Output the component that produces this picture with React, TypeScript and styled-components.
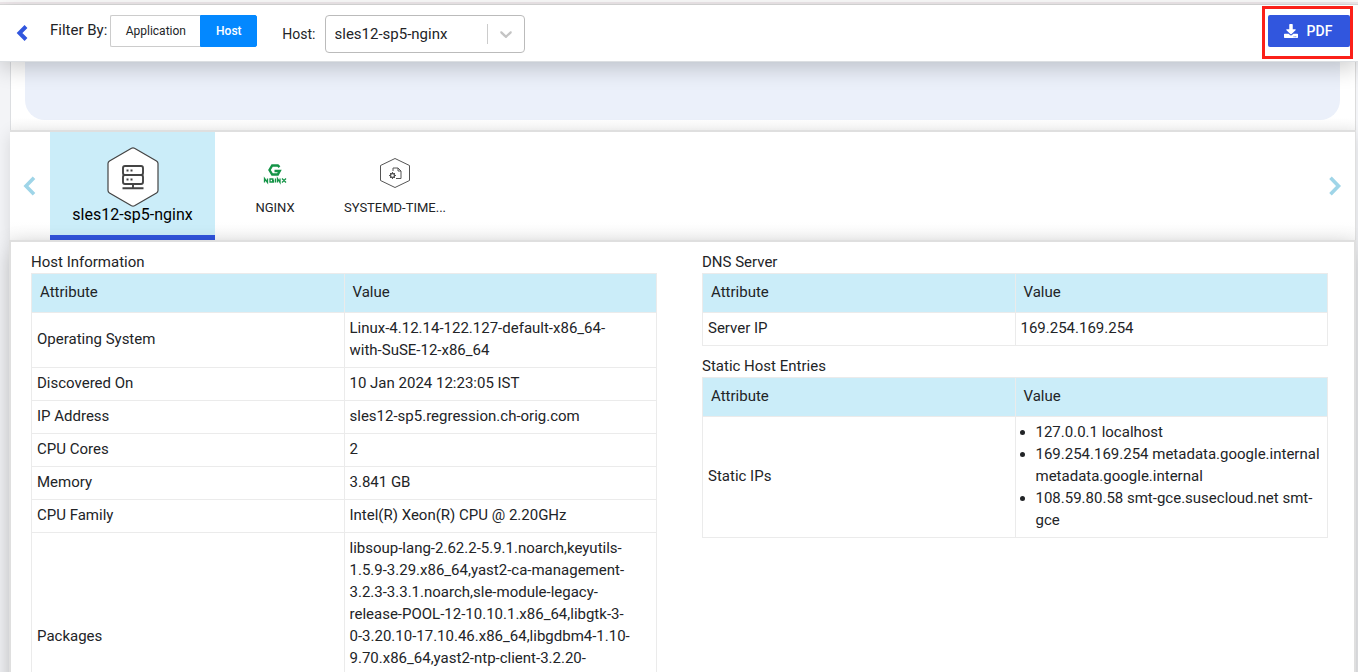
import React from 'react';
import styled, { createGlobalStyle } from 'styled-components';
import { FaDownload } from 'react-icons/fa';

const GlobalStyle = createGlobalStyle`
  *, *::before, *::after { box-sizing: border-box; }
  body {
    margin: 0;
    background: #f3f4f7;
    color: #222427;
    font-family: Roboto, "Liberation Sans", sans-serif;
    font-size: 15px;
    line-height: 22px;
  }
  button, select { font-family: inherit; }
`;

const Page = styled.div`
  height: 100vh;
  display: flex;
  flex-direction: column;
  overflow: hidden;
`;

const TopStrip = styled.div`
  flex: none;
  height: 5px;
  background: #fff;
  border-top: 2px solid #fbfbfb;
  border-bottom: 1px solid #dcdcdc;
  box-shadow: inset 0 2px #efe9ec;
`;

const Header = styled.header`
  flex: none;
  position: relative;
  z-index: 1;
  display: flex;
  align-items: flex-start;
  height: 57px;
  padding: 10px 8px 0 15px;
  background: #fff;
  border-bottom: 1px solid #dcdfe2;
  box-shadow: 0 6px 22px rgba(0, 0, 0, 0.2);
`;

const IconButton = styled.button`
  display: flex;
  align-items: center;
  justify-content: center;
  padding: 0;
  border: 0;
  background: none;
  cursor: pointer;
`;

const BackButton = styled(IconButton)`
  width: 14px;
  height: 36px;
`;

const FilterLabel = styled.span`
  margin: 0 3px 0 21px;
  line-height: 31px;
`;

const Segment = styled.button<{ $active?: boolean }>`
  height: 32px;
  padding: 0 12px;
  border: 1px solid ${p => (p.$active ? '#0388ff' : '#ccc')};
  border-radius: ${p => (p.$active ? '0 2px 2px 0' : '2px 0 0 2px')};
  border-right-width: ${p => (p.$active ? '1px' : '0')};
  background: ${p => (p.$active ? '#0388ff' : '#fff')};
  color: ${p => (p.$active ? '#fff' : '#222427')};
  font-size: 12px;
  font-weight: ${p => (p.$active ? 500 : 400)};
  cursor: pointer;
`;

const SegmentGroup = styled.div`
  display: flex;
  width: 147px;

  ${Segment}:first-child { flex: 0 0 90px; }
  ${Segment}:last-child { flex: 1; }
`;

const HostLabel = styled.label`
  margin: 0 9px 0 25px;
  font-size: 14px;
  line-height: 38px;
`;

const SelectBox = styled.div`
  position: relative;
  width: 200px;

  svg {
    position: absolute;
    top: 9px;
    right: 9px;
    pointer-events: none;
  }

  &::after {
    content: '';
    position: absolute;
    top: 9px;
    right: 37px;
    width: 1px;
    height: 20px;
    background: #ccc;
    pointer-events: none;
  }
`;

const Select = styled.select`
  display: block;
  width: 100%;
  height: 38px;
  padding: 0 40px 0 9px;
  border: 1px solid #bbb;
  border-radius: 4px;
  background: #fff;
  color: #222427;
  font-size: 15px;
  appearance: none;
`;

const PdfArea = styled.div`
  position: relative;
  margin-left: auto;

  &::after {
    content: '';
    position: absolute;
    inset: -9px -3px -12px -6px;
    border: 3px solid #fb2019;
    pointer-events: none;
  }
`;

const PdfButton = styled.button`
  display: flex;
  align-items: center;
  justify-content: center;
  gap: 9px;
  width: 82px;
  height: 32px;
  padding: 0 2px 0 0;
  border: 0;
  border-radius: 2px;
  background: #3156de;
  color: #fff;
  font-size: 14px;
  font-weight: 500;
  cursor: pointer;
`;

const Content = styled.main`
  flex: 1;
  min-height: 0;
  padding: 0 2px 0 10px;
  overflow-y: auto;
  scrollbar-width: none;
`;

const Summary = styled.section`
  height: 68px;
  padding: 0 15px 10px 14px;
  border-left: 1px solid #dcdee1;
  border-right: 1px solid #dcdcdc;
  background: linear-gradient(#fff 56px, #f8f8f8);
`;

const SummaryCard = styled.div`
  height: 100%;
  border-radius: 0 0 20px 20px;
  background: #ebf0fa;
`;

const Carousel = styled.nav`
  display: flex;
  align-items: stretch;
  height: 110px;
  border-top: 2px solid #dfdfdf;
  border-right: 1px solid #dfdfdf;
  background: linear-gradient(#fff 90px, #f9f9f9);
  box-shadow: 0 4px 16px rgba(0, 0, 0, 0.12);
`;

const ArrowButton = styled(IconButton)`
  flex: none;
  width: 40px;
`;

const Tabs = styled.div`
  flex: 1;
  display: flex;
`;

const Tab = styled.button<{ $active?: boolean }>`
  display: flex;
  flex-direction: column;
  align-items: center;
  justify-content: flex-end;
  width: ${p => (p.$active ? 165 : 120)}px;
  padding: 0 8px ${p => (p.$active ? 9 : 21)}px;
  border: 0;
  border-bottom: ${p => (p.$active ? '5px solid #3054de' : '0')};
  background: ${p => (p.$active ? '#cbedf9' : 'transparent')};
  color: ${p => (p.$active ? '#000' : '#222427')};
  font-size: ${p => (p.$active ? 16 : 13)}px;
  line-height: 22px;
  white-space: nowrap;
  cursor: pointer;
`;

const TabIcon = styled.span<{ $large?: boolean }>`
  display: flex;
  margin-bottom: ${p => (p.$large ? -3 : 8)}px;
`;

const Details = styled.section`
  position: relative;
  display: grid;
  grid-template-columns: 1fr 1fr;
  gap: 45px;
  margin: 2px 2px 0 1px;
  padding: 9px 26px 40px 20px;
  background: #fff;
  box-shadow: 0 0 0 2px #dfdfdf, 0 6px 20px rgba(0, 0, 0, 0.3);
`;

const Column = styled.div`
  display: flex;
  flex-direction: column;
  gap: 9px;
  min-width: 0;
`;

const Table = styled.table`
  width: 100%;
  table-layout: fixed;
  border-collapse: collapse;

  caption {
    text-align: left;
    white-space: nowrap;
  }

  th, td {
    border: 1px solid #ebebeb;
    text-align: left;
    font-weight: 400;
  }

  thead th {
    padding: 7px 8px 9px;
    background: #cbedf9;
  }

  tbody th, tbody td {
    padding: 4px 5px 6px;
    white-space: pre-line;
  }
`;

const List = styled.ul`
  margin: 0;
  padding-left: 15px;
`;

function Chevron({ right = false }: { right?: boolean }) {
  return (
    <svg width="14" height="20" viewBox="0 0 14 20" fill="none" stroke="#9fd5e8" strokeWidth="3.600" aria-hidden="true">
      <path d={right ? 'M2.500 1.800 10.500 10l-8 8.200' : 'M11 1.800 3 10l8 8.200'} />
    </svg>
  );
}

function ServerIcon() {
  return (
    <svg width="52" height="60" viewBox="0 0 52 60" fill="none" stroke="#444" aria-hidden="true">
      <path d="M24.500 1.200q1.500-.8 3 0L49.500 14q1.500 1 1.500 2.500v27q0 1.500-1.500 2.500L27.500 58.800q-1.500.8-3 0L2.500 46Q1 45 1 43.500v-27Q1 15 2.500 14z" fill="#fff" strokeWidth="1.200" />
      <g strokeWidth="1.900">
        <rect x="16" y="19" width="20" height="9" rx="2" />
        <rect x="16" y="28" width="20" height="9" rx="2" />
        <path d="M26 37v4M15.500 41.200h21" />
      </g>
      <path d="M19.500 23.500h2m2 0h2m-6 9h2m2 0h2" strokeWidth="1.800" />
    </svg>
  );
}

function NginxIcon() {
  return (
    <svg width="24" height="30" viewBox="0 0 24 30" fill="none" stroke="#149447" aria-hidden="true">
      <path d="M16.500 8.200 14.800 6.500H9.200L6.500 11l2.700 4.500h5.600l1.900-3.500H11.500" strokeWidth="2.400" />
      <path d="M1.500 23.500v-4l3 4v-4M10.500 20H7v3h3.500v-1.500H9M12.500 19.500v4M14.500 23.500v-4l2.500 4v-4M19 19.500l4 4m0-4-4 4" strokeWidth="1.300" />
    </svg>
  );
}

function TimerIcon() {
  return (
    <svg width="32" height="32" viewBox="0 0 32 32" fill="none" stroke="#555" aria-hidden="true">
      <path d="M16 1.500 30.500 8.500v15L16 30.500 1.500 23.500v-15z" fill="#fff" />
      <path d="M14 14v-3h5l3 3v7.500h-5M19 11v3h3" strokeWidth="1" />
      <circle cx="13.500" cy="18.500" r="2" strokeWidth="1.300" />
      <path d="M13.500 15v1.500m0 4V22M10 18.500h1.500m4 0H17M11 16l1 1m3 3 1 1m0-5-1 1m-3 3-1 1" strokeWidth="1" />
    </svg>
  );
}

type Row = [string, React.ReactNode];

function AttributeTable({ title, rows }: { title: string; rows: Row[] }) {
  return (
    <Table>
      <caption>{title}</caption>
      <thead>
        <tr>
          <th scope="col">Attribute</th>
          <th scope="col">Value</th>
        </tr>
      </thead>
      <tbody>
        {rows.map(([name, value]) => (
          <tr key={name}>
            <th scope="row">{name}</th>
            <td>{value}</td>
          </tr>
        ))}
      </tbody>
    </Table>
  );
}

const packages = [
  'libsoup-lang-2.62.2-5.9.1.noarch,keyutils-',
  '1.5.9-3.29.x86_64,yast2-ca-management-',
  '3.2.3-3.3.1.noarch,sle-module-legacy-',
  'release-POOL-12-10.10.1.x86_64,libgtk-3-',
  '0-3.20.10-17.10.46.x86_64,libgdbm4-1.10-',
  '9.70.x86_64,yast2-ntp-client-3.2.20-',
  '3.20.1.noarch,libxml2-tools-2.9.4-',
  '46.x86_64,cyrus-sasl-2.1.26-14.x86_64,',
  'timezone-2023c-74.x86_64',
];

const hostRows: Row[] = [
  ['Operating System', 'Linux-4.12.14-122.127-default-x86_64-\nwith-SuSE-12-x86_64'],
  ['Discovered On', '10 Jan 2024 12:23:05 IST'],
  ['IP Address', 'sles12-sp5.regression.ch-orig.com'],
  ['CPU Cores', '2'],
  ['Memory', '3.841 GB'],
  ['CPU Family', 'Intel(R) Xeon(R) CPU @ 2.20GHz'],
  ['Packages', packages.join('\n')],
];

const staticIps = (
  <List>
    <li>127.0.0.1 localhost</li>
    <li>169.254.169.254 metadata.google.internal metadata.google.internal</li>
    <li>108.59.80.58 smt-gce.susecloud.net smt-gce</li>
  </List>
);

export default function App() {
  return (
    <Page>
      <GlobalStyle />
      <TopStrip />
      <Header>
        <BackButton aria-label="Back">
          <svg width="12" height="16" viewBox="0 0 12 16" fill="none" stroke="#3156de" strokeWidth="4" aria-hidden="true">
            <path d="M10 1.500 3.500 8l6.500 6.500" />
          </svg>
        </BackButton>
        <FilterLabel>Filter By:</FilterLabel>
        <SegmentGroup role="group" aria-label="Filter by">
          <Segment>Application</Segment>
          <Segment $active>Host</Segment>
        </SegmentGroup>
        <HostLabel htmlFor="host">Host:</HostLabel>
        <SelectBox>
          <Select id="host">
            <option>sles12-sp5-nginx</option>
          </Select>
          <svg width="20" height="20" viewBox="0 0 20 20" fill="#c4c4c4" aria-hidden="true">
            <path d="M4.516 7.548c0.436-0.446 1.043-0.481 1.576 0l3.908 3.747 3.908-3.747c0.533-0.481 1.141-0.446 1.574 0 0.436 0.445 0.408 1.197 0 1.615-0.406 0.418-4.695 4.502-4.695 4.502-0.217 0.223-0.502 0.335-0.787 0.335s-0.570-0.112-0.789-0.335c0 0-4.287-4.084-4.695-4.502s-0.436-1.170 0-1.615z" />
          </svg>
        </SelectBox>
        <PdfArea>
          <PdfButton>
            <FaDownload size={14} aria-hidden="true" />
            PDF
          </PdfButton>
        </PdfArea>
      </Header>
      <Content>
        <Summary>
          <SummaryCard />
        </Summary>
        <Carousel aria-label="Discovered components">
          <ArrowButton aria-label="Previous">
            <Chevron />
          </ArrowButton>
          <Tabs>
            <Tab $active>
              <TabIcon $large>
                <ServerIcon />
              </TabIcon>
              sles12-sp5-nginx
            </Tab>
            <Tab>
              <TabIcon>
                <NginxIcon />
              </TabIcon>
              NGINX
            </Tab>
            <Tab>
              <TabIcon>
                <TimerIcon />
              </TabIcon>
              SYSTEMD-TIME...
            </Tab>
          </Tabs>
          <ArrowButton aria-label="Next">
            <Chevron right />
          </ArrowButton>
        </Carousel>
        <Details>
          <Column>
            <AttributeTable title="Host Information" rows={hostRows} />
          </Column>
          <Column>
            <AttributeTable title="DNS Server" rows={[['Server IP', '169.254.169.254']]} />
            <AttributeTable title="Static Host Entries" rows={[['Static IPs', staticIps]]} />
          </Column>
        </Details>
      </Content>
    </Page>
  );
}
